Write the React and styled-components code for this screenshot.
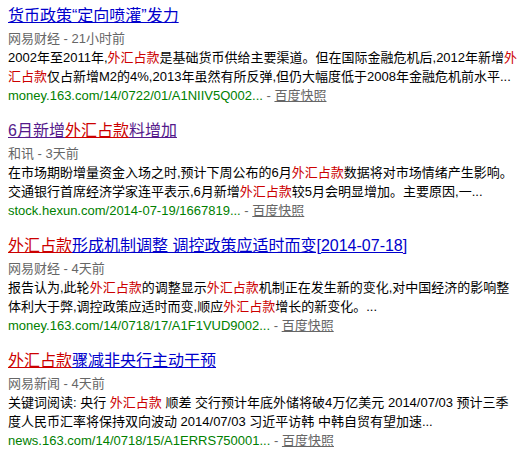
import React from "react"
import styled, { createGlobalStyle } from "styled-components"

const GlobalStyle = createGlobalStyle`
  body {
    margin: 0;
    background: #fff;
    font-family: "Liberation Sans", Arial, "Noto Sans CJK SC", sans-serif;
  }
`

const Page = styled.div`
  padding: 3px 8px;
`

const Result = styled.div`
  margin-bottom: 13px;
`

const Title = styled.a`
  display: inline-block;
  font-size: 16px;
  line-height: 26px;
  white-space: nowrap;
  cursor: pointer;
`

const TitlePart = styled.span`
  color: ${props => (props.hl ? "#c00" : props.visited ? "#551a8b" : "#00c")};
  text-decoration: underline;
`

const Line = styled.div`
  font-size: 13px;
  line-height: 19px;
  white-space: nowrap;
  color: ${props => props.color || "#000"};
`

const Em = styled.em`
  font-style: normal;
  color: #c00;
`

const Url = styled.span`
  color: #008000;
`

const Snap = styled.a`
  color: #666;
  text-decoration: underline;
  cursor: pointer;
`

const results = [
  {
    title: [["货币政策“定向喷灌”发力"]],
    source: "网易财经 - 21小时前",
    lines: [
      ["2002年至2011年,", ["外汇占款"], "是基础货币供给主要渠道。但在国际金融危机后,2012年新增", ["外"]],
      [["汇占款"], "仅占新增M2的4%,2013年虽然有所反弹,但仍大幅度低于2008年金融危机前水平..."],
    ],
    url: "money.163.com/14/0722/01/A1NIIV5Q002...",
  },
  {
    visited: true,
    title: [["6月新增"], ["外汇占款", true], ["料增加"]],
    source: "和讯 - 3天前",
    lines: [
      ["在市场期盼增量资金入场之时,预计下周公布的6月", ["外汇占款"], "数据将对市场情绪产生影响。"],
      ["交通银行首席经济学家连平表示,6月新增", ["外汇占款"], "较5月会明显增加。主要原因,一..."],
    ],
    url: "stock.hexun.com/2014-07-19/1667819...",
  },
  {
    title: [["外汇占款", true], ["形成机制调整 调控政策应适时而变[2014-07-18]"]],
    source: "网易财经 - 4天前",
    lines: [
      ["报告认为,此轮", ["外汇占款"], "的调整显示", ["外汇占款"], "机制正在发生新的变化,对中国经济的影响整"],
      ["体利大于弊,调控政策应适时而变,顺应", ["外汇占款"], "增长的新变化。..."],
    ],
    url: "money.163.com/14/0718/17/A1F1VUD9002...",
  },
  {
    title: [["外汇占款", true], ["骤减非央行主动干预"]],
    source: "网易新闻 - 4天前",
    lines: [
      ["关键词阅读: 央行 ", ["外汇占款"], " 顺差 交行预计年底外储将破4万亿美元 2014/07/03 预计三季"],
      ["度人民币汇率将保持双向波动 2014/07/03 习近平访韩 中韩自贸有望加速..."],
    ],
    url: "news.163.com/14/0718/15/A1ERRS750001...",
  },
]

export default function App() {
  return (
    <Page>
      <GlobalStyle />
      {results.map((r, i) => (
        <Result key={i}>
          <Title>
            {r.title.map(([text, hl], j) => (
              <TitlePart key={j} hl={hl} visited={r.visited}>
                {text}
              </TitlePart>
            ))}
          </Title>
          <Line color="#666">{r.source}</Line>
          {r.lines.map((parts, j) => (
            <Line key={j}>
              {parts.map((p, k) =>
                Array.isArray(p) ? <Em key={k}>{p[0]}</Em> : <span key={k}>{p}</span>
              )}
            </Line>
          ))}
          <Line color="#666">
            <Url>{r.url}</Url> - <Snap>百度快照</Snap>
          </Line>
        </Result>
      ))}
    </Page>
  )
}
